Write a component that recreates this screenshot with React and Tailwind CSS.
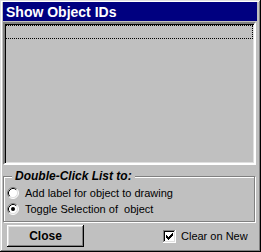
import React from "react";

function Radio({ checked }) {
  return (
    <svg width="12" height="12" viewBox="0 0 12 12" className="shrink-0">
      <circle cx="6" cy="6" r="5" fill="#fff" />
      <path d="M2.11 9.89 A5.5 5.5 0 0 1 9.89 2.11" fill="none" stroke="#808080" strokeWidth="1" />
      <path d="M9.89 2.11 A5.5 5.5 0 0 1 2.11 9.89" fill="none" stroke="#fff" strokeWidth="1" />
      <path d="M2.82 9.18 A4.5 4.5 0 0 1 9.18 2.82" fill="none" stroke="#000" strokeWidth="1" />
      <path d="M9.18 2.82 A4.5 4.5 0 0 1 2.82 9.18" fill="none" stroke="#dfdfdf" strokeWidth="1" />
      {checked && <circle cx="6" cy="6" r="2" fill="#000" />}
    </svg>
  );
}

function Check() {
  const rows = [
    "......x",
    ".....xx",
    "x...xxx",
    "xx.xxx.",
    "xxxxx..",
    ".xxx...",
    "..x....",
  ];
  const rects = [];
  rows.forEach((r, y) =>
    r.split("").forEach((c, x) => {
      if (c === "x") rects.push(<rect key={x + "-" + y} x={x + 3} y={y + 3} width="1" height="1" fill="#000" />);
    })
  );
  return (
    <svg width="13" height="13" viewBox="0 0 13 13" className="shrink-0" shapeRendering="crispEdges">
      <rect x="0" y="0" width="13" height="13" fill="#fff" />
      <rect x="0" y="0" width="12" height="1" fill="#808080" />
      <rect x="0" y="0" width="1" height="12" fill="#808080" />
      <rect x="1" y="1" width="10" height="1" fill="#000" />
      <rect x="1" y="1" width="1" height="10" fill="#000" />
      <rect x="0" y="12" width="13" height="1" fill="#fff" />
      <rect x="12" y="0" width="1" height="13" fill="#fff" />
      <rect x="1" y="11" width="11" height="1" fill="#dfdfdf" />
      <rect x="11" y="1" width="1" height="11" fill="#dfdfdf" />
      {rects}
    </svg>
  );
}

export default function App() {
  return (
    <div
      className="w-[261px] h-[252px] bg-[#c0c0c0] flex flex-col pt-[2px] pl-[3px] pr-[5px] text-black shadow-[inset_-1px_-1px_0_#000,inset_1px_1px_0_#dfdfdf,inset_-2px_-2px_0_#808080,inset_2px_2px_0_#fff]"
      style={{ fontFamily: '"Liberation Sans", Arial, sans-serif' }}
    >
      <div className="h-[19px] -mr-[1px] bg-[#000080] text-white font-bold text-[14px] leading-none flex items-center pl-[3px] pt-[1px]">
        Show Object IDs
      </div>
      <div className="mt-[1px] h-[143px] border-2 border-t-[#808080] border-l-[#808080] border-b-white border-r-white shadow-[inset_1px_1px_0_#000,inset_-1px_-1px_0_#dfdfdf] p-[1px] pl-[0px]">
        <div className="h-[14px] border border-dotted border-black"></div>
      </div>
      <div className="relative mt-[11px] mr-[1px] h-[46px] border border-[#808080] shadow-[inset_1px_1px_0_#fff,1px_1px_0_#fff] pt-[8px] pl-[3px]">
        <span className="absolute -top-[8px] left-[8px] px-[3px] bg-[#c0c0c0] font-bold italic text-[12px] leading-[14px]">
          Double-Click List to:
        </span>
        <div className="h-[16px] flex items-center gap-[6px] text-[11px]">
          <Radio />
          <span>Add label for object to drawing</span>
        </div>
        <div className="h-[16px] flex items-center gap-[6px] text-[11px]">
          <Radio checked />
          <span>Toggle Selection of&nbsp; object</span>
        </div>
      </div>
      <div className="mt-[3px] flex items-center">
        <button className="ml-[4px] w-[77px] h-[22px] font-bold text-[12px] bg-[#c0c0c0] shadow-[inset_-1px_-1px_0_#000,inset_1px_1px_0_#fff,inset_-2px_-2px_0_#808080,inset_2px_2px_0_#dfdfdf]">
          Close
        </button>
        <div className="ml-[79px] flex items-center gap-[5px] text-[11px]">
          <Check />
          <span>Clear on New</span>
        </div>
      </div>
    </div>
  );
}
